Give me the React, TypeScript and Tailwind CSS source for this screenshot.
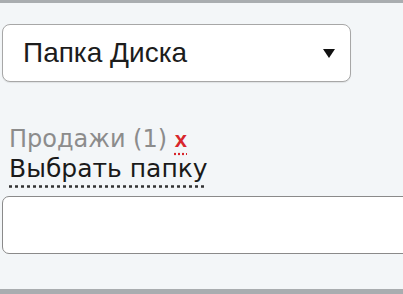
export default function App() {
    return (
        <div className="flex h-[294px] w-[403px] flex-col overflow-hidden border-t-[3px] border-b-[5px] border-[#a9adb0] bg-[#f3f6f8] font-['Liberation_Sans',Arial,sans-serif]">
            <div className="ml-[2px] mt-[21px] flex h-[58px] w-[349px] shrink-0 items-center justify-between rounded-[8px] border border-[#a7a7a7] bg-white pl-[20px] pr-[14px] shadow-[0_1px_1px_rgba(0,0,0,0.08)]">
                <span className="text-[28px] leading-none text-[#1c1c1c]">Папка Диска</span>
                <svg width="14" height="11" viewBox="0 0 14 11" className="mt-[1px]">
                    <path d="M1 1h12L7 10z" fill="#111" />
                </svg>
            </div>

            <div className="mt-[43px] pl-[9px] font-['DejaVu_Sans',Verdana,sans-serif] text-[24px] leading-[28px] text-[#8c8c8c]">
                Продажи (1){' '}
                <span className="font-['Liberation_Sans',Arial,sans-serif] text-[22px] font-bold text-[#d8262c] underline decoration-dotted decoration-[#d8262c] underline-offset-[6px]">
                    x
                </span>
            </div>

            <div className="pl-[9px] font-['DejaVu_Sans',Verdana,sans-serif] text-[25px] leading-[30px] text-[#1a1a1a]">
                <span className="underline decoration-dotted decoration-[#333] underline-offset-[8px]">
                    Выбрать папку
                </span>
            </div>

            <div className="ml-[2px] mt-[12px] h-[58px] w-[420px] shrink-0 rounded-[7px] border-[1.5px] border-[#8a8a8a] bg-white" />
        </div>
    );
}
